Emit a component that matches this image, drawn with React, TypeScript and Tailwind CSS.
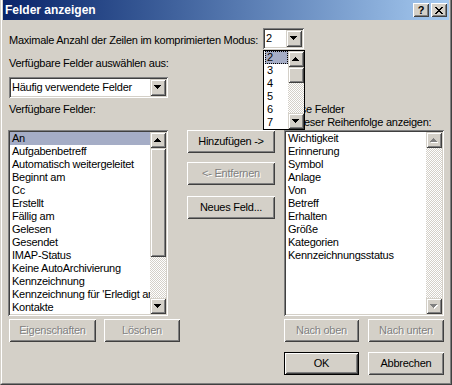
import React from "react";

const raised =
  "shadow-[inset_1px_1px_0_#ffffff,inset_-1px_-1px_0_#404040,inset_2px_2px_0_#d4d0c8,inset_-2px_-2px_0_#808080]";
const sbtn =
  "shadow-[inset_1px_1px_0_#d4d0c8,inset_-1px_-1px_0_#404040,inset_2px_2px_0_#ffffff,inset_-2px_-2px_0_#808080]";
const sunken =
  "shadow-[inset_1px_1px_0_#808080,inset_-1px_-1px_0_#ffffff,inset_2px_2px_0_#404040,inset_-2px_-2px_0_#d4d0c8]";
const checker =
  "bg-[repeating-conic-gradient(#d4d0c8_0%_25%,#ffffff_0%_50%)] bg-[length:2px_2px]";
const sel = "bg-[#a5adc6]";

function Tri({ dir, disabled }: { dir: "up" | "down"; disabled?: boolean }) {
  const rows = [7, 5, 3, 1];
  const rects = (fill: string, off: number) =>
    rows.map((w, i) => {
      const y = dir === "down" ? i : 3 - i;
      return (
        <rect key={fill + i} x={(7 - w) / 2 + off} y={y + off} width={w} height={1} fill={fill} />
      );
    });
  return (
    <svg width={8} height={5} shapeRendering="crispEdges">
      {disabled && rects("#ffffff", 1)}
      {rects(disabled ? "#808080" : "#000000", 0)}
    </svg>
  );
}

function ScrollBtn({ dir, disabled }: { dir: "up" | "down"; disabled?: boolean }) {
  return (
    <div className={`w-[16px] h-[16px] shrink-0 bg-[#d4d0c8] flex items-center justify-center ${sbtn}`}>
      <Tri dir={dir} disabled={disabled} />
    </div>
  );
}

function Combo({ text, w }: { text: string; w: string }) {
  return (
    <div className={`${w} h-[21px] bg-white p-[2px] flex ${sunken}`}>
      <div className="flex-1 pl-px leading-[17px] whitespace-nowrap overflow-hidden">{text}</div>
      <div className={`w-[16px] h-[17px] bg-[#d4d0c8] flex items-center justify-center ${sbtn}`}>
        <Tri dir="down" />
      </div>
    </div>
  );
}

function Btn({
  label,
  w,
  disabled,
  def,
}: {
  label: string;
  w: string;
  disabled?: boolean;
  def?: boolean;
}) {
  const txt = disabled ? "text-[#808080] [text-shadow:1px_1px_0_#ffffff]" : "text-black";
  if (def) {
    return (
      <div className={`${w} h-[23px] shrink-0 border border-black`}>
        <div className={`w-full h-full flex items-center justify-center bg-[#d4d0c8] ${raised} ${txt}`}>
          {label}
        </div>
      </div>
    );
  }
  return (
    <div className={`${w} h-[23px] shrink-0 flex items-center justify-center bg-[#d4d0c8] ${raised} ${txt}`}>
      {label}
    </div>
  );
}

const leftItems = [
  "An",
  "Aufgabenbetreff",
  "Automatisch weitergeleitet",
  "Beginnt am",
  "Cc",
  "Erstellt",
  "Fällig am",
  "Gelesen",
  "Gesendet",
  "IMAP-Status",
  "Keine AutoArchivierung",
  "Kennzeichnung",
  "Kennzeichnung für 'Erledigt am'",
  "Kontakte",
];

const rightItems = [
  "Wichtigkeit",
  "Erinnerung",
  "Symbol",
  "Anlage",
  "Von",
  "Betreff",
  "Erhalten",
  "Größe",
  "Kategorien",
  "Kennzeichnungsstatus",
];

function CloseGlyph() {
  const rows: [number, number][][] = [
    [[0, 2], [6, 2]],
    [[1, 2], [5, 2]],
    [[2, 4]],
    [[3, 2]],
    [[2, 4]],
    [[1, 2], [5, 2]],
    [[0, 2], [6, 2]],
  ];
  return (
    <svg width={8} height={7} shapeRendering="crispEdges">
      {rows.map((r, y) =>
        r.map(([x, w], i) => <rect key={`${y}-${i}`} x={x} y={y} width={w} height={1} fill="#000" />)
      )}
    </svg>
  );
}

export default function App() {
  return (
    <div className="relative w-[452px] h-[385px] bg-[#d4d0c8] text-[11px] leading-[13px] tracking-[-0.25px] text-black font-['Liberation_Sans',Arial,sans-serif] border-l border-r border-b border-l-[#d4d0c8] border-r-[#404040] border-b-[#404040] overflow-hidden">
      <div className="h-full flex flex-col border-l border-r border-b border-l-white border-r-[#808080] border-b-[#808080] px-px pb-px">
        {/* Title bar */}
        <div className="h-[20px] shrink-0 flex items-center bg-linear-to-r from-[#0a246a] to-[#a6caf0] pl-[2px] pr-[2px]">
          <div className="flex-1 text-white font-bold text-[12px] leading-[14px] tracking-normal">Felder anzeigen</div>
          <div className={`w-[16px] h-[14px] bg-[#d4d0c8] flex items-center justify-center font-bold text-[11px] leading-[11px] ${raised}`}>
            ?
          </div>
          <div className={`ml-[2px] w-[16px] h-[14px] bg-[#d4d0c8] flex items-center justify-center ${raised}`}>
            <CloseGlyph />
          </div>
        </div>

        {/* Body */}
        <div className="flex flex-col pl-[5px]">
          <div className="mt-[8px] flex items-start">
            <div className="w-[255px] pl-px pt-[6px] whitespace-nowrap">
              Maximale Anzahl der Zeilen im komprimierten Modus:
            </div>
            <Combo text="2" w="w-[41px]" />
          </div>

          <div className="mt-[8px] pl-px whitespace-nowrap">Verfügbare Felder auswählen aus:</div>
          <div className="mt-[7px] ml-px">
            <Combo text="Häufig verwendete Felder" w="w-[159px]" />
          </div>

          <div className="mt-[5px] flex items-start">
            <div className="w-[276px] pl-px">Verfügbare Felder:</div>
            <div className="pl-px">
              <div>Diese Felder</div>
              <div>in dieser Reihenfolge anzeigen:</div>
            </div>
          </div>

          <div className="mt-px flex h-[186px]">
            {/* left list */}
            <div className={`w-[160px] h-full bg-white p-[2px] flex ${sunken}`}>
              <div className="flex-1 flex flex-col overflow-hidden">
                {leftItems.map((t, i) => (
                  <div key={t} className={`h-[13px] shrink-0 pl-[2px] whitespace-nowrap ${i === 0 ? sel : ""}`}>
                    {t}
                  </div>
                ))}
              </div>
              <div className="w-[16px] flex flex-col">
                <ScrollBtn dir="up" />
                <div className={`h-[109px] shrink-0 bg-[#d4d0c8] ${sbtn}`} />
                <div className={`flex-1 ${checker}`} />
                <ScrollBtn dir="down" />
              </div>
            </div>

            {/* middle buttons */}
            <div className="ml-[19px] w-[88px] flex flex-col">
              <Btn label="Hinzufügen ->" w="w-[88px]" />
              <div className="mt-[9px]">
                <Btn label="<- Entfernen" w="w-[88px]" disabled />
              </div>
              <div className="mt-[11px]">
                <Btn label="Neues Feld..." w="w-[88px]" />
              </div>
            </div>

            {/* right list */}
            <div className={`ml-[9px] w-[160px] h-full bg-white p-[2px] flex ${sunken}`}>
              <div className="flex-1 flex flex-col overflow-hidden">
                {rightItems.map((t) => (
                  <div key={t} className="h-[13px] shrink-0 pl-[2px] whitespace-nowrap">
                    {t}
                  </div>
                ))}
              </div>
              <div className="w-[16px] flex flex-col">
                <ScrollBtn dir="up" disabled />
                <div className={`flex-1 ${checker}`} />
                <ScrollBtn dir="down" disabled />
              </div>
            </div>
          </div>

          <div className="mt-[3px] flex">
            <div className="ml-px">
              <Btn label="Eigenschaften" w="w-[87px]" disabled />
            </div>
            <div className="ml-[8px]">
              <Btn label="Löschen" w="w-[76px]" disabled />
            </div>
            <div className="ml-[104px]">
              <Btn label="Nach oben" w="w-[75px]" disabled />
            </div>
            <div className="ml-[9px]">
              <Btn label="Nach unten" w="w-[76px]" disabled />
            </div>
          </div>

          <div className="mt-[10px] flex">
            <div className="ml-[276px]">
              <Btn label="OK" w="w-[75px]" def />
            </div>
            <div className="ml-[9px]">
              <Btn label="Abbrechen" w="w-[76px]" />
            </div>
          </div>
        </div>
      </div>

      {/* open dropdown list */}
      <div className="absolute left-[262px] top-[50px] w-[42px] h-[80px] border border-black bg-white flex">
        <div className="flex-1 flex flex-col pl-px">
          {["2", "3", "4", "5", "6", "7"].map((t, i) => (
            <div
              key={t}
              className={`h-[13px] shrink-0 leading-[11px] pl-px ${
                i === 0 ? `${sel} border border-dotted border-black` : "border border-transparent"
              }`}
            >
              {t}
            </div>
          ))}
        </div>
        <div className="w-[16px] flex flex-col">
          <ScrollBtn dir="up" />
          <div className={`h-[16px] shrink-0 bg-[#d4d0c8] ${sbtn}`} />
          <div className={`flex-1 ${checker}`} />
          <ScrollBtn dir="down" />
        </div>
      </div>
    </div>
  );
}
